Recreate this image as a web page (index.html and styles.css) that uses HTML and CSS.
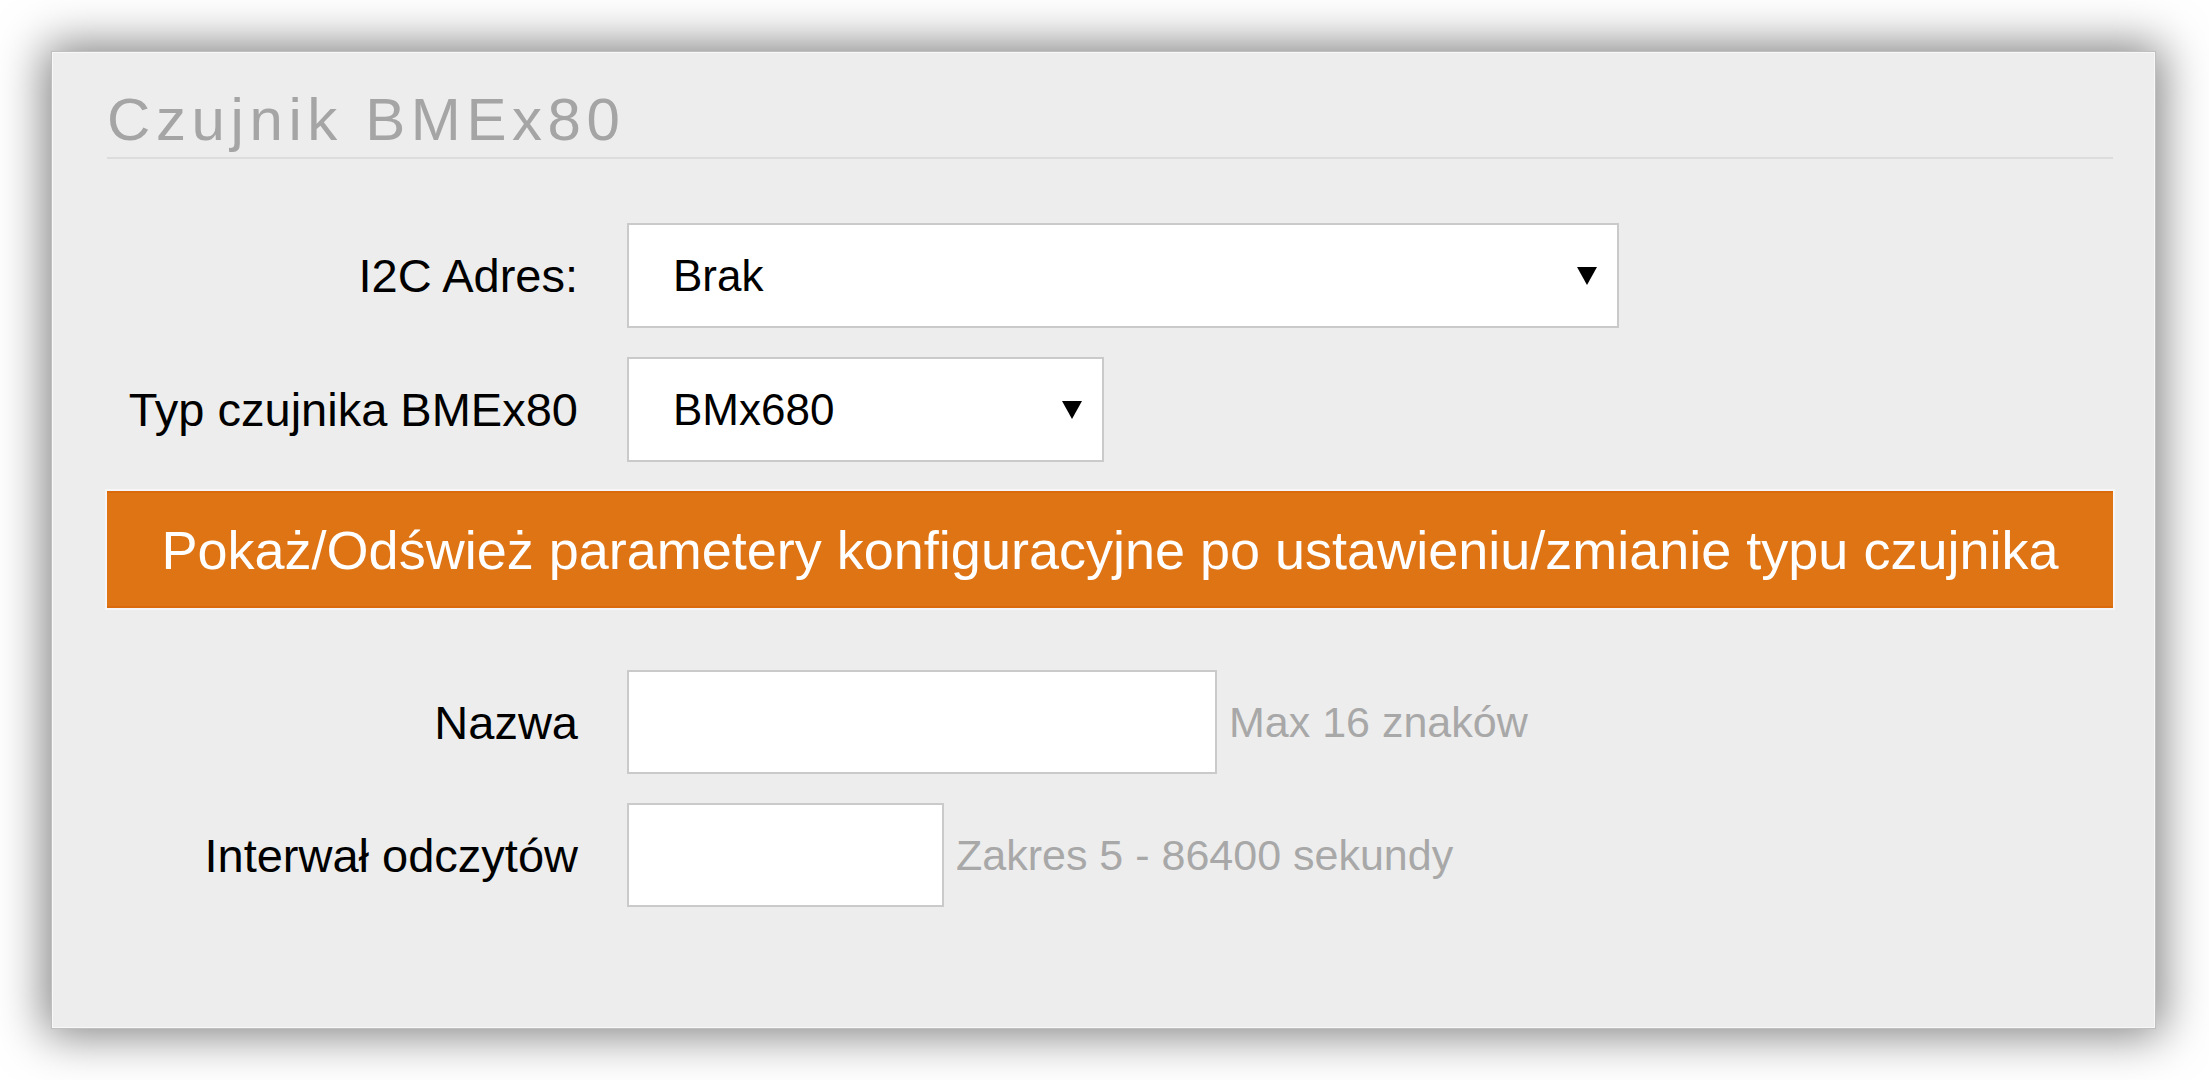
FILE: index.html
```html
<!DOCTYPE html>
<html lang="pl">
<head>
    <meta charset="UTF-8">
    <meta name="viewport" content="width=device-width, initial-scale=1.0">
    <title>Czujnik BMEx80</title>
    <link rel="stylesheet" href="styles.css">
</head>
<body>
    <div class="panel">
        <h2 class="title">Czujnik BMEx80</h2>

        <div class="form">
            <label for="addr">I2C Adres:</label>
            <select id="addr" class="wide">
                <option>Brak</option>
                <option>0x76</option>
                <option>0x77</option>
            </select>

            <label for="type">Typ czujnika BMEx80</label>
            <select id="type" class="narrow">
                <option>BMx680</option>
                <option>BMx280</option>
            </select>

            <button class="refresh" onclick="refreshParams()">Pokaż/Odśwież parametery konfiguracyjne po ustawieniu/zmianie typu czujnika</button>

            <label for="name">Nazwa</label>
            <div class="field">
                <input type="text" id="name" class="name-input" maxlength="16">
                <span class="hint">Max 16 znaków</span>
            </div>

            <label for="interval">Interwał odczytów</label>
            <div class="field">
                <input type="text" id="interval" class="interval-input">
                <span class="hint">Zakres 5 - 86400 sekundy</span>
            </div>
        </div>
    </div>

    <script>
        function refreshParams() {
            const type = document.getElementById('type').value;
            console.log('refresh', type);
        }
    </script>
</body>
</html>
```

FILE: styles.css
```css
body {
    margin: 0;
    padding: 51px 0 53px 51px;
    background-color: #ffffff;
    font-family: "Liberation Sans", Arial, sans-serif;
}

.panel {
    width: 2105px;
    padding: 33px 42px 121px 55px;
    box-sizing: border-box;
    background-color: #ededed;
    border: 1px solid #bfbfbf;
    box-shadow: inset 0 0 0 1px #f8f8f8, 0 0 44px 6px rgba(0, 0, 0, 0.5);
}

.title {
    margin: 0 0 64px;
    padding-bottom: 2px;
    font-size: 60px;
    font-weight: normal;
    line-height: 70px;
    letter-spacing: 5.6px;
    color: #a5a5a5;
    border-bottom: 2px solid #dcdcdc;
}

.form {
    display: grid;
    grid-template-columns: 471px 1fr;
    column-gap: 49px;
    row-gap: 29px;
    align-items: center;
}

.form label {
    text-align: right;
    font-size: 47px;
    color: #000;
}

.form select {
    height: 105px;
    padding: 0 0 0 44px;
    box-sizing: border-box;
    font-family: "Liberation Sans", Arial, sans-serif;
    font-size: 44px;
    color: #000;
    border: 2px solid #cacaca;
    border-radius: 0;
    appearance: none;
    -webkit-appearance: none;
    background: #fff url("data:image/svg+xml,%3Csvg xmlns='http://www.w3.org/2000/svg' width='20' height='18'%3E%3Cpath d='M0 0H20L10 18Z' fill='%23000'/%3E%3C/svg%3E") no-repeat right 20px center / 20px 18px;
    outline: none;
}

.form select.wide {
    width: 992px;
}

.form select.narrow {
    width: 477px;
}

.refresh {
    grid-column: 1 / -1;
    height: 117px;
    margin-bottom: 33px;
    padding: 0;
    font-family: "Liberation Sans", Arial, sans-serif;
    font-size: 54px;
    color: #fff;
    background-color: #df7415;
    border: none;
    border-top: 2px solid #da6a0c;
    border-bottom: 2px solid #da6a0c;
    box-shadow: 0 0 0 2px #f6f6f6;
    cursor: pointer;
}

.refresh:hover {
    background-color: #d0680f;
}

.field {
    display: flex;
    align-items: center;
    gap: 12px;
}

.field input {
    height: 104px;
    box-sizing: border-box;
    padding: 0 20px;
    font-family: "Liberation Sans", Arial, sans-serif;
    font-size: 44px;
    background-color: #fff;
    border: 2px solid #cacaca;
    border-radius: 0;
    outline: none;
}

.name-input {
    width: 590px;
}

.interval-input {
    width: 317px;
}

.hint {
    font-size: 43px;
    color: #a8a8a8;
}
```
